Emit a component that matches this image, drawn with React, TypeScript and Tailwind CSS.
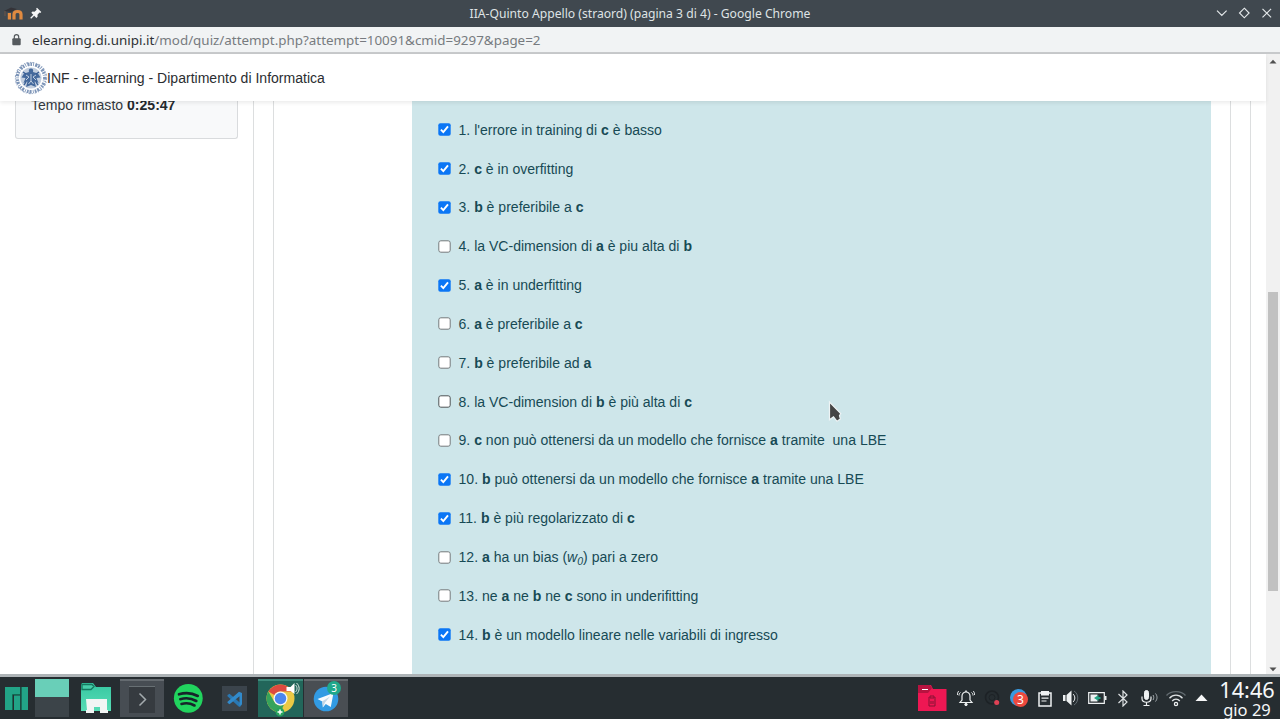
import React from "react";

const SANS = "font-['Liberation_Sans',Arial,sans-serif]";
const NOTO = "font-['Noto_Sans',sans-serif]";

const B = ({ children }: { children: React.ReactNode }) => <b className="font-bold">{children}</b>;

const answers: { on: boolean; dark?: boolean; text: React.ReactNode }[] = [
  { on: true, text: <>l'errore in training di <B>c</B> è basso</> },
  { on: true, text: <><B>c</B> è in overfitting</> },
  { on: true, text: <><B>b</B> è preferibile a <B>c</B></> },
  { on: false, text: <>la VC-dimension di <B>a</B> è piu alta di <B>b</B></> },
  { on: true, text: <><B>a</B> è in underfitting</> },
  { on: false, text: <><B>a</B> è preferibile a <B>c</B></> },
  { on: false, text: <><B>b</B> è preferibile ad <B>a</B></> },
  { on: false, dark: true, text: <>la VC-dimension di <B>b</B> è più alta di <B>c</B></> },
  { on: false, text: <><B>c</B> non può ottenersi da un modello che fornisce <B>a</B> tramite&nbsp; una LBE</> },
  { on: true, text: <><B>b</B> può ottenersi da un modello che fornisce <B>a</B> tramite una LBE</> },
  { on: true, text: <><B>b</B> è più regolarizzato di <B>c</B></> },
  { on: false, text: <><B>a</B> ha un bias (<i>w<sub className="text-[10.5px] leading-none">0</sub></i>) pari a zero</> },
  { on: false, text: <>ne <B>a</B> ne <B>b</B> ne <B>c</B> sono in underifitting</> },
  { on: true, text: <><B>b</B> è un modello lineare nelle variabili di ingresso</> },
];

function Check({ on, dark }: { on: boolean; dark?: boolean }) {
  return (
    <svg width="13" height="13" viewBox="0 0 13 13" className="shrink-0">
      {on ? (
        <>
          <rect x="0.3" y="0.3" width="12.4" height="12.4" rx="2" fill="#0b76f5" />
          <path d="M2.9 6.7 5.3 9.1 10 3.3" fill="none" stroke="#fff" strokeWidth="1.9" />
        </>
      ) : (
        <rect x="0.8" y="0.8" width="11.4" height="11.4" rx="2" fill="#fff" stroke={dark ? "#4d5355" : "#74797b"} />
      )}
    </svg>
  );
}

function WindowTitle() {
  return (
    <div className="flex h-[27px] shrink-0 items-center bg-[#40484f]">
      <div className="flex w-[64px] items-center pl-1">
        <svg width="20" height="16" viewBox="0 0 20 16">
          <path d="M0 5 7 1.5 13 3 7 6Z" fill="#343338" />
          <path d="M1 5v5" stroke="#6d5548" />
          <path d="M5.4 13.5V7M10 13.5V8.3q0-2.800 3.500-2.800t3.500 2.800v5.200" fill="none" stroke="#e08a40" strokeWidth="3.2" />
        </svg>
        <svg className="-mt-0.5 ml-1.5" width="12" height="12" viewBox="0 0 12 12">
          <path d="M7 .7 11.3 5l-1 .9-.8-.3-2 2.1.1 2L6.4 11 1.3 5.8l1.2-1.2 2 .1 2.2-2L6.2 1.5Z" fill="#f5f6f7" />
          <path d="M4 8 .7 11.3" stroke="#f5f6f7" strokeWidth="1.3" />
        </svg>
      </div>
      <div className={`${NOTO} flex-1 whitespace-nowrap pt-px text-center text-[12.15px] leading-none text-[#dfe3e5]`}>
        IIA-Quinto Appello (straord) (pagina 3 di 4) - Google Chrome
      </div>
      <svg className="-mt-px" width="64" height="14" viewBox="0 0 64 14" fill="none" stroke="#e4e8ea" strokeWidth="1.15">
        <path d="m1 4.6 4.8 4.8 4.8-4.8M28.3 2.2 33.1 7l-4.8 4.8L23.5 7ZM46.5 2.8l8.6 8.6M55.1 2.8l-8.6 8.6" />
      </svg>
    </div>
  );
}

function AddressBar() {
  return (
    <div className="flex h-[27px] shrink-0 items-center border-b-2 border-[#c7c9cb] bg-[#f1f3f4] pl-3">
      <svg width="9" height="12" viewBox="0 0 9 12">
        <rect x="0.3" y="4.3" width="8.4" height="7" rx="1" fill="#555a5e" />
        <path d="M2.3 5V2.9a2.2 2.2 0 0 1 4.4 0V5" fill="none" stroke="#555a5e" strokeWidth="1.2" />
      </svg>
      <div className={`${NOTO} ml-[11px] whitespace-nowrap pt-[3px] text-[13.4px] leading-none text-[#777b7f]`}>
        <span className="text-[#2d3033]">elearning.di.unipi.it</span>/mod/quiz/attempt.php?attempt=10091&amp;cmid=9297&amp;page=2
      </div>
    </div>
  );
}

function Seal() {
  return (
    <svg width="34" height="36" viewBox="0 0 34 36" fill="none">
      <circle cx="17" cy="18" r="13.8" stroke="#7d95b8" strokeWidth="3.4" strokeDasharray="1.7 1.1 .8 1.3 2.2 .9" />
      <circle cx="17" cy="18" r="15.6" stroke="#93a6c3" strokeWidth="1.1" strokeDasharray="2 1.9 1 1.3" />
      <circle cx="17" cy="18" r="10.6" fill="#c3cfdf" />
      <path d="M17 8.500c-2 0-2.600 1.700-2 3.500l-5 1.500-2.500 4 4 .5-2 5 4-1.500L12 27l5-2 5 2-1.500-5.500 4 1.500-2-5 4-.5-2.500-4-5-1.500c.6-1.800 0-3.500-2-3.500Z" fill="#44699c" />
      <path d="m12 15 3 2-3 3M22 15l-3 2 3 3M17 14v8M14.500 24l2.500-3 2.500 3" stroke="#c0cedf" strokeWidth="1" />
      <path d="m9 12 3 2M25 12l-3 2M10 25l2-3M24 25l-2-3" stroke="#355c93" strokeWidth="1.3" />
    </svg>
  );
}

function Page() {
  return (
    <div className={`${SANS} flex min-w-0 flex-1 flex-col bg-white`}>
      <header className="z-10 flex h-[47px] shrink-0 items-center bg-white pl-[14px] shadow-[0_2px_4px_rgba(0,0,0,0.08)]">
        <Seal />
        <span className="-ml-px whitespace-nowrap pt-[2px] text-[14.06px] leading-none text-[#2b2e31]">INF - e-learning - Dipartimento di Informatica</span>
      </header>
      <div className="flex min-h-0 flex-1 overflow-hidden">
        <aside className="w-[253px] shrink-0 pl-[15px]">
          <div className="flex h-[38px] w-[223px] items-start rounded-b-[3px] border border-t-0 border-[#d9dbdd] bg-[#f8f9fa] pl-[15px] text-[14.06px] leading-[22px] text-[#343a40]">
            <span className="-mt-[7px]">Tempo rimasto <b className="text-[#24292e]">0:25:47</b></span>
          </div>
        </aside>
        <main className="flex w-[998px] shrink-0 border-x border-[#dcdedf] px-[19px]">
          <section className="flex flex-1 border-x border-[#dcdedf] pl-[138px] pr-[19px]">
            <div className="flex-1 bg-[#cee6ea] pl-[26px] pt-[9.3px]">
              {answers.map((a, i) => (
                <label key={i} className="flex h-[38.85px] items-center whitespace-nowrap text-[14.06px] leading-[22px] text-[#174a55]">
                  <Check on={a.on} dark={a.dark} />
                  <span className="ml-[7.5px]">{i + 1}. {a.text}</span>
                </label>
              ))}
            </div>
          </section>
        </main>
      </div>
    </div>
  );
}

function Scrollbar() {
  return (
    <div className="flex w-[14px] shrink-0 flex-col items-center bg-[#f1f1f1] pb-[2px] pt-[5px]">
      <svg width="8" height="5" viewBox="0 0 8 5"><path d="M.5 4.5 4 .7l3.5 3.8Z" fill="#505050" /></svg>
      <div className="mt-[228px] h-[299px] w-[10px] bg-[#c1c1c1]" />
      <svg className="mt-auto" width="8" height="5" viewBox="0 0 8 5"><path d="M.5.5h7L4 4.3Z" fill="#505050" /></svg>
    </div>
  );
}

function Launchers() {
  return (
    <div className="flex h-full items-start">
      <svg width="35" height="42" viewBox="0 0 35 42">
        <path d="M5 10h15v7h-7v16H5ZM14 18.5h6V33h-6ZM21.5 10H28v23h-6.5Z" fill="#22a487" />
        <path d="M12.5 33V17.5H20M21 10v23" fill="none" stroke="#126852" />
      </svg>
      <div className="mt-[2px] flex h-[38px] w-[34px] flex-col bg-[#3c4449]"><div className="h-[18px] bg-[#69cfb8]" /></div>
      <svg width="51" height="42" viewBox="0 0 51 42">
        <defs><linearGradient id="folder" x2="0" y2="1"><stop stopColor="#36c7a1" /><stop offset="1" stopColor="#58ddb6" /></linearGradient></defs>
        <path d="M13 6h11l3 4H42v24H12V8Z" fill="url(#folder)" />
        <path d="M13 12.5V7.5h10l2 2-3 3Z" fill="#48ceaa" stroke="#15795f" strokeWidth="1.3" />
        <path d="M17 22h21v11h1v3h-8v-6h-6v6h-8v-3h1Z" fill="#f2f5f4" />
      </svg>
      <div className="mt-[2px] flex h-[38px] w-[44px] items-center justify-center border-t-2 border-[#656b70] bg-[#474d53]">
        <svg width="26" height="27" viewBox="0 0 26 27">
          <rect width="26" height="27" fill="#363b40" /><path d="M0 .5h26" stroke="#687074" /><path d="m10.5 7.5 6 6-6 6" fill="none" stroke="#a4aaad" strokeWidth="1.5" />
        </svg>
      </div>
      <svg width="50" height="42" viewBox="0 0 50 42">
        <circle cx="24.3" cy="21.3" r="14.4" fill="#21d45e" />
        <path d="M15 17.3c6.5-2 13.5-1.2 18.8 1.7M16.3 22.2c5.500-1.7 11.500-.8 16 1.8M17.5 27c4.500-1.300 9.300-.6 13 1.500" fill="none" stroke="#17242a" strokeWidth="2.6" strokeLinecap="round" />
      </svg>
      <svg width="43" height="42" viewBox="0 0 43 42">
        <rect x="8" y="9" width="25" height="25" fill="#3b444c" />
        <path d="m13.5 18 2-1.3 11.7 10V29l-2 .9-11.7-10.7Z" fill="#2a78b3" />
        <path d="m13.5 25.7 2 1.5 10-8v9.5l2.5-1.2V16l-3-1.3-11.5 10Z" fill="#318acb" />
      </svg>
      <div className="ml-[0.5px] mt-[2px] flex h-[38px] w-[45px] justify-center border-t-2 border-[#3e8b7c] bg-[#22665a]">
        <svg width="45" height="36" viewBox="0 0 45 36">
          <circle cx="22.5" cy="17.5" r="14" fill="#ebc944" />
          <path d="M10.4 10.5a14 14 0 0 1 24.2 0H22.5a7 7 0 0 0-6.1 3.5Z" fill="#dc4a40" />
          <path d="M10.4 10.5 16.4 21a7 7 0 0 0 9.6 2.5l-3.5 8A14 14 0 0 1 10.4 10.5Z" fill="#36a35b" />
          <circle cx="22.5" cy="17.5" r="7" fill="#f4f7f8" /><circle cx="22.5" cy="17.5" r="5.7" fill="#4b86ee" />
          <circle cx="22" cy="31" r="4.4" fill="#26a45c" /><path d="M22 28.5v5M19.5 31h5" stroke="#fff" strokeWidth="1.5" />
          <path d="M28.5 6h4l4-4v11l-4-3h-4Z" fill="#fff" /><path d="M37.5 4c2 2 2 5 0 7M38.5 2c3.5 3 3.5 8 0 11" stroke="#dce5e2" fill="none" />
        </svg>
      </div>
      <div className="relative ml-[1.5px] mt-[2px] flex h-[38px] w-[44px] border-t-2 border-[#676b6f] bg-[#494e53]">
        <svg width="44" height="36" viewBox="0 0 44 36">
          <circle cx="22" cy="18" r="12.3" fill="#329be3" />
          <path d="m13.5 18 16-6-2.7 14-5-3-3 3.5-.5-6Z" fill="#f8fbfd" /><path d="m18 20.5 8-5-5 6-1.7 4Z" fill="#c2d7e6" />
        </svg>
        <span className={`${NOTO} absolute left-[23px] top-0 flex h-[14px] w-[14px] items-center justify-center rounded-full bg-[#20a88b] text-[10px] leading-none text-white`}>3</span>
      </div>
    </div>
  );
}

function Tray() {
  return (
    <div className="flex h-full items-center">
      <svg width="37" height="42" viewBox="0 0 37 42">
        <path d="M8 8h13l2 4h13.5v22H8Z" fill="#ee1753" /><path d="M8 8h12l2 3-4 5H8Z" fill="#b71340" /><path d="M12 12.5h6" stroke="#fff" />
        <path d="M18 21h8M20 21v-2h4v2M19 22v7h6v-7M21 24v3M23 24v3" fill="none" stroke="#851234" />
      </svg>
      <svg className="ml-[10px]" width="18" height="18" viewBox="0 0 18 18" fill="none" stroke="#eef1f2">
        <path d="M3 13.5h12l-2-2.5V7a4 4 0 0 0-8 0v4Z" strokeWidth="1.2" /><path d="M9 1.5V3" strokeWidth="1.5" /><circle cx="9" cy="15.5" r="1.2" fill="#eef1f2" />
        <path d="M3.5 3.5c-1 .7-1.500 1.500-1.500 3M1.800 2C.8 3 .4 4.400.4 6M14.500 3.500c1 .7 1.500 1.500 1.500 3M16.200 2c1 1 1.400 2.400 1.400 4" />
      </svg>
      <svg className="ml-[9px]" width="17" height="18" viewBox="0 0 17 18">
        <circle cx="8" cy="8.5" r="6.5" fill="none" stroke="#1d2226" strokeWidth="1.6" /><circle cx="8" cy="8.5" r="3" fill="none" stroke="#1d2226" /><circle cx="12.7" cy="13.5" r="2.5" fill="#df4255" />
      </svg>
      <div className="relative ml-[9px] h-[18px] w-[18px]">
        <svg width="18" height="18" viewBox="0 0 18 18"><circle cx="8.5" cy="8.5" r="8.5" fill="#3999df" /><circle cx="10.5" cy="10.5" r="7.5" fill="#ec493e" /></svg>
        <span className={`${NOTO} absolute left-[7px] top-[4px] text-[12px] leading-[13px] text-white`}>3</span>
      </div>
      <svg className="ml-[10px]" width="14" height="17" viewBox="0 0 14 17">
        <path d="M1 3h12v13H1Z" fill="none" stroke="#eef1f2" strokeWidth="1.5" /><path d="M3 1h8v4.5H3Z" fill="#eef1f2" /><path d="M3.5 8.2h7M3.5 11h5" stroke="#eef1f2" strokeWidth="1.2" />
      </svg>
      <svg className="ml-[11px]" width="16" height="16" viewBox="0 0 16 16">
        <path d="M0 5h2.5v6H0ZM3.5 5l5-4.5v15L3.5 11Z" fill="#eef1f2" /><path d="M10 4c2.4 2 2.4 6 0 8" stroke="#eef1f2" fill="none" /><path d="M11 1c5 3 5 11 0 14" stroke="#646d73" fill="none" />
      </svg>
      <svg className="ml-[9px]" width="19" height="12" viewBox="0 0 19 12">
        <path d="M.7.7h15.6v10.6H.7Z" fill="none" stroke="#eef1f2" strokeWidth="1.2" /><path d="M17 4h1.5v4H17ZM2.5 2.5h7v7h-7Z" fill="#eef1f2" /><path d="m6 6 4.5-3v2h2v2h-2v2Z" fill="#26a184" />
      </svg>
      <svg className="ml-[10px]" width="12" height="17" viewBox="0 0 12 17" fill="none" stroke="#dce0e2"><path d="m1.5 4 8.5 8-4 4V1l4 4-8.500 8" strokeWidth="1.2" /></svg>
      <svg className="ml-[12px]" width="18" height="16" viewBox="0 0 18 16" fill="none" stroke="#eef1f2">
        <rect x="3.5" y=".5" width="4" height="9" rx="2" fill="#eef1f2" /><path d="M1 6.5v2c0 5 9 5 9 0v-2M5.5 12v3.5M2.5 15.5h6" strokeWidth="1.2" /><path d="M12 5c1 1.5 1 3.5 0 5M14.5 3.5c2 2.5 2 5.5 0 8" stroke="#a9b0b4" />
      </svg>
      <svg className="ml-[7px]" width="20" height="17" viewBox="0 0 20 17" fill="none">
        <path d="M.5 5.5C5 .2 15 .2 19.5 5.5" stroke="#626b70" strokeWidth="1.3" /><path d="M3.5 8.2c3.5-4 9.5-4 13 0M6.2 11c2-2.5 5.6-2.5 7.6 0" stroke="#dfe3e5" strokeWidth="1.3" /><circle cx="10" cy="14" r="1.6" stroke="#eef1f2" strokeWidth="1.3" />
      </svg>
      <svg className="ml-[9px]" width="13" height="8" viewBox="0 0 13 8"><path d="M.5 7h12l-6-6.5Z" fill="#f6f7f8" /></svg>
      <div className={`${NOTO} ml-[11px] flex h-[42px] w-[56px] flex-col items-center whitespace-nowrap text-[#f6f8f9]`}>
        <span className="mt-[2px] text-[21.7px] leading-[22px]">14:46</span>
        <span className="text-[16.5px] leading-[18px]">gio 29</span>
      </div>
    </div>
  );
}

export default function App() {
  return (
    <div className="relative flex h-[719px] w-[1280px] flex-col overflow-hidden bg-white">
      <WindowTitle />
      <AddressBar />
      <div className="flex h-[620px] shrink-0"><Page /><Scrollbar /></div>
      <div className="h-[3px] shrink-0 bg-[#aeb4b7]" />
      <footer className="flex h-[42px] shrink-0 justify-between overflow-hidden bg-[#262d31] pr-[5px]"><Launchers /><Tray /></footer>
      <svg className="absolute left-[828px] top-[400px]" width="16" height="23" viewBox="0 0 16 23">
        <path d="M1.5 2v17.8l4-3 3.5 4.5 3.4-2.2-.9-3.4 1.3-2.2Z" fill="#444" stroke="#eef4f5" strokeWidth="1.2" />
      </svg>
    </div>
  );
}
